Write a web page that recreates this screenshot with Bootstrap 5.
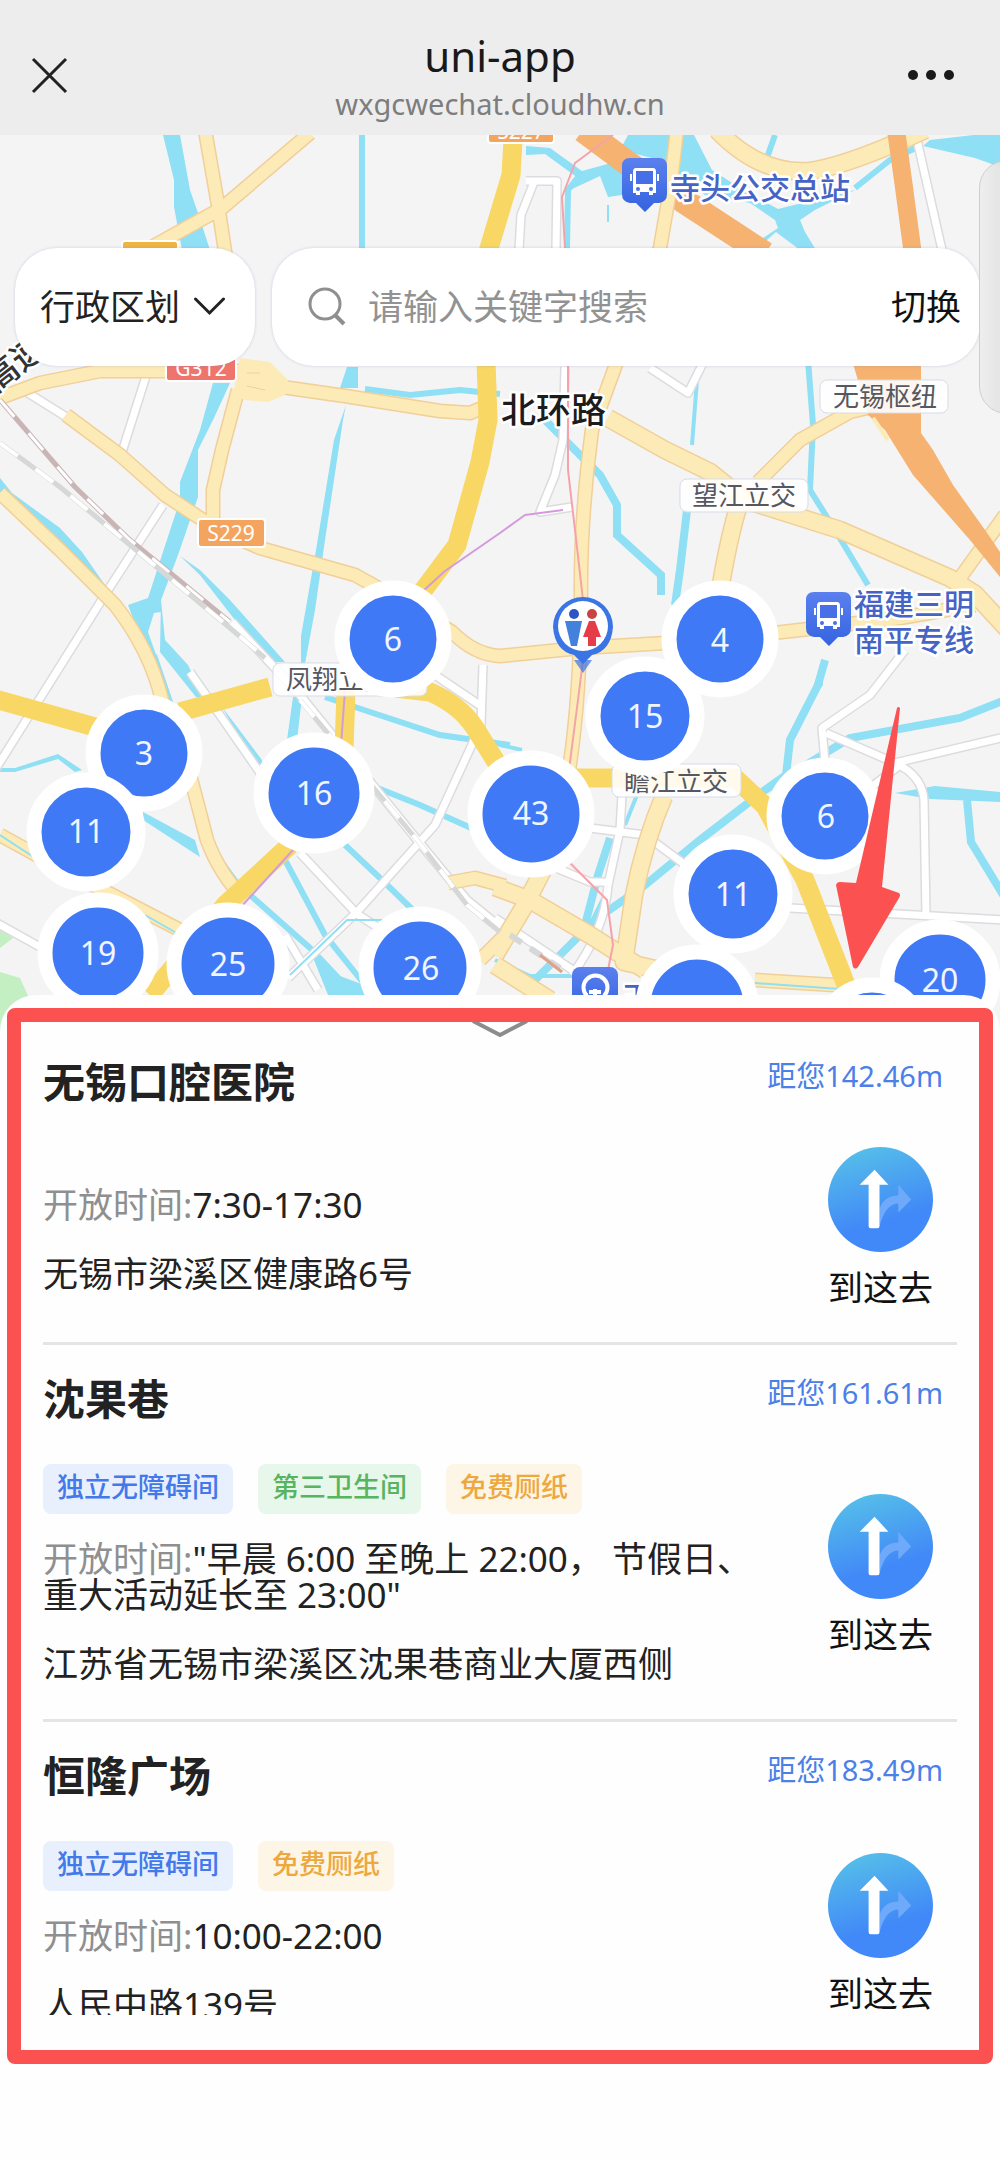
<!DOCTYPE html>
<html lang="zh-CN">
<head>
<meta charset="utf-8">
<meta name="viewport" content="width=device-width, initial-scale=1">
<title>uni-app</title>
<link href="https://cdn.jsdelivr.net/npm/bootstrap@5.3.0/dist/css/bootstrap.min.css" rel="stylesheet">
<style>
  :root { --brand: #4079f5; --note: #fb5151; --ink: #222; }
  body { font-family: "Noto Sans", "Noto Sans CJK SC", sans-serif; color: var(--ink); background: #fefefe; }
  .app-bar { height: 135px; background: #ededed; padding: 27px 30px 0; }
  .app-title { font-size: 42px; line-height: 58px; color: #191919; }
  .app-host { font-size: 29px; line-height: 38px; color: #7d7d7d; }
  .bar-btn { width: 64px; margin-top: 27px; line-height: 0; }
  .map-area { height: 905px; background: #f4f4f4; }
  .map-tools { padding: 113px 20px 0 15px; gap: 17px; z-index: 2; }
  .pill { height: 118px; border-radius: 42px; background-color: #fff; box-shadow: 0 0 3px rgba(120,130,190,.35); font-size: 35px; }
  .area-select { width: 240px; border: 0; padding: 0 25px; color: var(--ink);
    background-image: url("data:image/svg+xml,%3Csvg xmlns='http://www.w3.org/2000/svg' viewBox='0 0 32 20'%3E%3Cpath d='M2 2l14 14L30 2' fill='none' stroke='%23222' stroke-width='3' stroke-linecap='round'/%3E%3C/svg%3E");
    background-size: 33px 20px; background-position: right 29px center; background-repeat: no-repeat; }
  .search-box { padding: 0 19px 0 36px; }
  .search-box input { font-size: 35px; padding: 0 0 0 22px; }
  .search-box input::placeholder { color: #929292; opacity: 1; }
  .switch-btn { font-size: 35px; color: #111; }
  .side-panel { top: 25px; right: -60px; width: 81px; height: 254px; border-radius: 28px; z-index: 3;
    background: linear-gradient(90deg, #eee, #e3e3e3 30%); border: 1px solid #ccc; opacity: .93; }
  .sheet { margin-top: -45px; border-radius: 36px 36px 0 0; background: #fefefe; z-index: 3; }
  .sheet-handle { height: 44px; line-height: 0; margin-bottom: -11px; }
  .marked-frame { top: 13px; right: 7px; bottom: 97px; left: 7px; border: 14px solid var(--note); border-radius: 8px; pointer-events: none; }
  .place-list { padding: 0 43px; margin-bottom: 146px; min-height: 0; scrollbar-width: none; }
  .place-list::-webkit-scrollbar { display: none; }
  .place { padding: 29px 0 36px; border-bottom: 3px solid #e5e5e5; }
  .place-name { font-size: 42px; line-height: 50px; font-weight: 700; }
  .place-dist { font-size: 29px; line-height: 38px; color: #4b80e8; padding-right: 14px; }
  .place-body { margin-top: 40px; padding-right: 24px; gap: 60px; font-size: 35px; line-height: 36px; }
  .tag-row { gap: 25px; }
  .tag { height: 50px; padding: 0 14px 4px; border-radius: 8px; font-size: 27px; line-height: 46px; font-weight: 500; }
  .tag-blue { color: #4379ea; background: #e8f0fe; }
  .tag-green { color: #57b560; background: #e8f7ec; }
  .tag-gold { color: #eda83e; background: #fdf5e6; }
  .hours { margin: 27px 0 33px; }
  .hours span { color: #8f8f8f; }
  .address { margin: 0 0 1px; }
  .go-btn { width: 105px; font-size: 35px; line-height: 36px; color: #111; }
  .go-btn svg { margin-bottom: 18px; }
  .cased { stroke: #f1cf98; } .lite { stroke: #fcebb7; } .bold-road { stroke: #f8d765; }
  .w-case { stroke: #dcdce0; } .w-road { stroke: #fff; }
  .halo { paint-order: stroke; stroke: #fff; stroke-width: 5px; stroke-linejoin: round; font-weight: 500; }
</style>
<script src="https://cdn.jsdelivr.net/npm/bootstrap@5.3.0/dist/js/bootstrap.bundle.min.js"></script>
</head>
<body class="vh-100 d-flex flex-column overflow-hidden">

<header class="app-bar d-flex justify-content-between flex-shrink-0">
  <button type="button" class="bar-btn btn p-0 border-0 text-start align-self-start" aria-label="关闭">
    <svg width="40" height="42" viewBox="0 0 40 42" fill="none" stroke="#222" stroke-width="3"><path d="M3 5l33 33M36 5L3 38"/></svg>
  </button>
  <div class="text-center">
    <div class="app-title">uni-app</div>
    <div class="app-host">wxgcwechat.cloudhw.cn</div>
  </div>
  <button type="button" class="bar-btn btn p-0 border-0 align-self-start" aria-label="更多">
    <svg width="64" height="42" viewBox="0 0 64 42" fill="#191919"><circle cx="7" cy="21" r="5"/><circle cx="25" cy="21" r="5"/><circle cx="43" cy="21" r="5"/></svg>
  </button>
</header>

<section class="map-area position-relative overflow-hidden flex-shrink-0">
  <svg class="position-absolute top-0 start-0 w-100 h-100" viewBox="0 135 1000 905" preserveAspectRatio="xMidYMin slice" role="img" aria-label="地图">
    <defs>
      <path id="roads-s" d="M205 130L218 205L240 350M310 133L222 208L150 248M0 398L40 383L100 371L240 371M238 390L222 450L213 490V530M482 408L470 413L440 411L345 396L275 386M66 415L120 455L165 495L215 528L260 548L355 575L400 600L452 632Q475 655 500 656L580 648L700 641L800 630L900 618L975 605M0 493L60 550L115 605Q150 650 162 700L190 775L207 840Q220 875 245 900M0 835L60 868L180 930M448 883L475 878L505 886M758 482L800 440L850 412L880 405M960 578L1005 515M677 130L670 190L660 248L615 367L592 430Q580 520 581 600Q580 700 569 770M755 980L850 986M480 960L510 930"/>
      <path id="roads-m" d="M717 130Q760 175 810 171Q850 165 925 130M608 418L665 450L710 472L745 500L840 530L950 578L975 594L1010 632M742 495Q730 530 720 590M664 796Q645 840 634 895L624 962L660 970M495 887L530 900L590 935L645 970M543 870L525 905L495 955M495 965L550 1000"/>
      <path id="roads-b" d="M-5 699L95 727M180 712L270 687M395 688L430 692Q460 705 475 728L500 768M290 845L225 905L150 995M346 690L344 750M486 360L488 420L480 462L457 545L425 588L395 625M513 140L511 175L487 255M500 778H735L765 806L805 880L848 990"/>
      <path id="roads-w" d="M20 388L68 418M147 373L122 452M163 505L108 590L-5 770M232 622L300 695L418 841L467 900L510 935M190 672L265 780M300 853L357 914L385 932M483 665L481 725L435 825L357 912L288 978M435 675L481 706M-5 922L40 947M285 935L318 990M526 181H557L556 250M534 182L521 215L519 250M565 367L563 440L555 475L540 512L572 507M650 368L688 393L702 365M917 140L942 250M905 650L870 695L822 728L825 762M826 733L895 763L1005 737M895 763Q922 775 924 800L926 916M900 765L870 788M790 908L1005 920M622 795L620 830L608 885Q605 930 572 975M590 828L645 835L684 864M556 868L590 882H608M495 918L580 975"/>
      <linearGradient id="pin-fill" x1="0" y1="0" x2="0" y2="1"><stop offset="0" stop-color="#5b80ee"/><stop offset="1" stop-color="#3464e0"/></linearGradient>
      <linearGradient id="go-fill" x1=".2" y1="0" x2=".5" y2="1"><stop offset="0" stop-color="#56c1e8"/><stop offset=".75" stop-color="#4188f8"/><stop offset="1" stop-color="#4188f8"/></linearGradient>
      <g id="bus-pin">
        <path d="M8 0H37Q45 0 45 8V36Q45 44 37 45H32L23 54L14 45H8Q0 44 0 36V8Q0 0 8 0Z" fill="url(#pin-fill)"/>
        <path d="M14 10H31Q34 10 34 14V35H31V37H27V34H18V37H14V35H11V14Q11 10 14 10Z" fill="#fff"/>
        <rect x="14" y="13" width="17" height="13" fill="#4870e6"/><circle cx="16" cy="31" r="2" fill="#4870e6"/><circle cx="29" cy="31" r="2" fill="#4870e6"/>
        <path d="M9 16v7M36 16v7" stroke="#fff" stroke-width="2"/>
      </g>
    </defs>

    <!-- green space and water -->
    <path d="M0 972L20 978L30 1000V1040H0ZM0 928L13 938L0 948Z" fill="#c3efc3"/>
    <g fill="#8fdff5">
      <path d="M163 135H180L190 190L198 213L210 250H182L174 207V180ZM347 367H358V388H340ZM346 405L334 440L316 550L301 636V664H305L315 610L325 540L343 420Z"/>
      <path d="M213 383H230L213 420L198 450V497L178 555L161 600V612L154 613L148 632L172 700H168L145 650L128 605L148 598L162 555L180 500V482L200 430ZM161 600L165 640L188 665L203 697H196L160 652Z"/>
      <path d="M0 478L12 493L60 528L82 552L107 588L70 555L15 505L0 492ZM180 556L200 570L230 600L285 662H275L235 620L200 575Z"/>
      <path d="M293 697H302L297 740H287ZM143 812L195 840L200 857L143 820ZM310 950L340 976L372 988V1000H330ZM222 707L262 760V768L255 765Z"/>
      <path d="M628 135H694L712 170L740 188L778 209L855 190L815 210L800 220L805 232L816 250H800L776 232L760 246V240L778 228L775 220L750 203L705 195L660 160L620 150ZM930 140L1000 132V167L975 158L923 146ZM526 146L550 148L582 171L622 160V195L608 197L600 176L570 190L578 178L545 154L526 155Z"/>
      <path d="M895 793L935 786L1000 792V802L930 799ZM823 658V685L808 705L812 690ZM0 768H15L58 754L82 770L75 772L58 759L15 772H0Z"/>
    </g>
    <g fill="none" stroke="#8fdff5" stroke-width="6">
      <path d="M362 135V248M365 389L410 395L460 390L500 394M325 697L370 712L440 735L510 745M370 785L420 805L480 832M345 845L380 878L415 912M285 860L325 935L365 985M250 895L310 948L345 985"/>
      <path d="M855 188L890 160L922 145M775 135L762 172M582 172L568 190L567 248M808 360L813 425L810 490L835 530L868 585"/>
      <path stroke-width="8" d="M545 420L575 450L600 475L617 505V535L661 575V595M687 510L680 570L675 605M825 660L818 685L790 740L786 775L765 790L700 840L645 885L595 920L535 980M1005 700L960 718L850 738L765 790M967 800L971 842L1005 898M610 838L598 875L585 925"/>
      <path stroke-width="4" d="M697 380L692 445M195 785L210 845L238 883M155 655L172 705M495 960L530 976H575M500 745L522 750M637 795L625 825M590 925L605 895"/>
      <path stroke-width="2" d="M608 205V222"/>
    </g>

    <!-- roads -->
    <g fill="none" stroke-linejoin="round">
      <use href="#roads-w" class="w-case" stroke-width="10"/><use href="#roads-w" class="w-road" stroke-width="7"/>
      <path d="M583 130L630 165L690 205L765 254" stroke="#f5b271" stroke-width="25"/>
      <use href="#roads-s" class="cased" stroke-width="15"/><use href="#roads-m" class="cased" stroke-width="19"/>
      <use href="#roads-s" class="lite" stroke-width="12"/><use href="#roads-m" class="lite" stroke-width="16"/>
      <path d="M240 358L270 362L288 380L285 395L268 402L245 400L233 395Z" fill="#fcebb7"/>
      <path d="M247 373h13M247 386l18 4" stroke="#f1cf98"/>
      <use href="#roads-b" class="bold-road" stroke-width="19"/>
      <path d="M896 130L903 180L913 255" stroke="#f5b271" stroke-width="18"/>
      <path d="M852 360H921V433L933 450L953 485L985 530L1000 552V577L970 540L913 475L885 430L868 415Z" fill="#f5b271"/>
      <path d="M873 418L888 440" stroke="#fcebb7" stroke-width="4"/>
      <path d="M0 400L75 487L130 540L230 622" stroke="#c9b5b5" stroke-width="5"/><path d="M0 400L75 487L130 540L230 622" stroke="#fff" stroke-width="3" stroke-dasharray="22 22"/>
      <path d="M0 443L60 487L130 545L230 628L265 658M300 700L418 841L467 905L500 932" stroke="#d6d8d8" stroke-width="5"/><path d="M0 443L60 487L130 545L230 628L265 658M300 700L418 841L467 905L500 932" stroke="#fff" stroke-width="4" stroke-dasharray="22 22"/>
      <path d="M510 935L560 968" stroke="#d6d8d8" stroke-width="6" stroke-dasharray="14 10"/><path d="M540 955L562 972" stroke="#e0a08e" stroke-width="3"/>
      <path d="M755 983L840 989M0 835L35 858M145 915L180 935M290 975L347 920H385" stroke="#8fdff5" stroke-width="2"/>
      <path d="M613 135L575 163L562 197L565 248L568 367V470L575 530L583 600V660L578 700L569 770M570 863L607 900L613 945L608 970" stroke="#f4a3aa" stroke-width="2"/>
      <path d="M563 510L525 515L500 533L445 571L423 591M345 690L341 745M293 850L240 908" stroke="#d39bdc" stroke-width="2"/>
    </g>

    <!-- road numbers and place labels -->
    <g font-size="21" fill="#fff" text-anchor="middle" stroke-width="2">
      <rect x="488" y="115" width="66" height="28" rx="3" fill="#f3a560" stroke="#fff"/><text x="521" y="139">S227</text>
      <rect x="122" y="241" width="56" height="28" rx="3" fill="#f0b440" stroke="#fff"/>
      <rect x="166" y="352" width="70" height="29" rx="3" fill="#ef746c" stroke="#fff"/><text x="201" y="376">G312</text>
      <rect x="198" y="519" width="67" height="28" rx="3" fill="#f3a560" stroke="#fff"/><text x="231" y="541">S229</text>
    </g>
    <g fill="#fff" fill-opacity=".88" stroke="#d5dde8">
      <rect x="820" y="380" width="128" height="33" rx="7"/><rect x="680" y="479" width="128" height="33" rx="7"/>
      <rect x="273" y="663" width="154" height="33" rx="7"/><rect x="612" y="764" width="129" height="33" rx="7"/>
    </g>
    <g font-size="26" fill="#555862">
      <text x="833" y="406">无锡枢纽</text><text x="692" y="505">望江立交</text><text x="286" y="689">凤翔立交</text><text x="624" y="791">瞻江立交</text>
    </g>
    <text class="halo" x="501" y="423" font-size="35" fill="#1c1c1c">北环路</text>
    <text class="halo" x="-12" y="388" font-size="34" fill="#333" transform="rotate(-38 0 380)">高速</text>
    <g class="halo" font-size="30" fill="#4664c6">
      <text x="670" y="199">寺头公交总站</text><text x="854" y="615">福建三明</text><text x="854" y="651">南平专线</text><text x="622" y="1008">王</text>
    </g>
    <use href="#bus-pin" x="622" y="158"/><use href="#bus-pin" x="806" y="592"/>
    <rect x="572" y="967" width="46" height="45" rx="8" fill="url(#pin-fill)"/>
    <path d="M587 996A12 12 0 1 1 604 996M595 989v12M589 992h12" fill="none" stroke="#fff" stroke-width="4"/>

    <!-- selected toilet pin -->
    <path d="M574 660L583 673L592 660" fill="#3b74e4" opacity=".7"/>
    <path d="M553 627A30 30 0 1 1 613 627Q611 651 592 655L583 664L574 655Q555 651 553 627Z" fill="#3b74e4"/>
    <circle cx="583" cy="626" r="25" fill="#fff"/>
    <circle cx="574" cy="614" r="5" fill="#2f55c4"/><path d="M565 621H582L577 646H571Z" fill="#4481dc"/>
    <circle cx="592" cy="614" r="5" fill="#c94343"/><path d="M589 621H595L601 637H596V646H588V637H583Z" fill="#e63c49"/>

    <!-- clusters -->
    <g fill="var(--brand)" stroke="#fff" stroke-width="15">
      <circle cx="393" cy="639" r="51"/><circle cx="720" cy="639" r="51"/><circle cx="645" cy="716" r="52"/><circle cx="144" cy="753" r="51"/>
      <circle cx="86" cy="832" r="52"/><circle cx="314" cy="793" r="53"/><circle cx="531" cy="814" r="56"/><circle cx="825" cy="816" r="51"/>
      <circle cx="98" cy="953" r="53"/><circle cx="228" cy="964" r="54"/><circle cx="420" cy="968" r="54"/><circle cx="697" cy="1006" r="54"/>
      <circle cx="733" cy="894" r="52"/><circle cx="940" cy="980" r="53"/><circle cx="872" cy="1036" r="51"/>
    </g>
    <g font-size="32" fill="#f0f5ff" text-anchor="middle">
      <text x="393" y="651">6</text><text x="720" y="652">4</text><text x="645" y="728">15</text><text x="144" y="765">3</text>
      <text x="86" y="843">11</text><text x="314" y="805">16</text><text x="531" y="825">43</text><text x="826" y="828">6</text>
      <text x="98" y="965">19</text><text x="228" y="976">25</text><text x="421" y="980">26</text><text x="733" y="906">11</text><text x="940" y="992">20</text>
    </g>
    <path d="M897 708Q898 706 900 708L882 887L899 893Q901 895 899 898L858 967Q855 970 853 967L836 885Q837 882 840 882L856 883Z" fill="var(--note)"/>
  </svg>

  <div class="map-tools position-relative d-flex">
    <select class="pill area-select form-select flex-shrink-0" aria-label="行政区划"><option>行政区划</option></select>
    <form class="pill search-box d-flex align-items-center flex-grow-1">
      <svg class="flex-shrink-0" width="38" height="40" viewBox="0 0 38 40" fill="none" stroke="#8f8f8f" stroke-width="3"><circle cx="17" cy="17" r="15"/><path d="M27 28l9 9" stroke-width="4"/></svg>
      <input class="form-control border-0 shadow-none bg-transparent flex-grow-1" type="search" placeholder="请输入关键字搜索" aria-label="请输入关键字搜索">
      <button type="button" class="switch-btn btn p-0 border-0 flex-shrink-0">切换</button>
    </form>
  </div>
  <div class="side-panel position-absolute"></div>
</section>

<main class="sheet position-relative d-flex flex-column flex-grow-1 overflow-hidden">
  <button type="button" class="sheet-handle btn border-0 p-0 d-flex align-items-end justify-content-center flex-shrink-0" aria-label="收起">
    <svg width="56" height="20" viewBox="0 0 56 20" fill="none" stroke="#8c8c8c" stroke-width="4"><path d="M1 2L28 16L55 2"/></svg>
  </button>
  <div class="place-list flex-grow-1 overflow-auto">
    <article class="place">
      <div class="d-flex justify-content-between"><h2 class="place-name m-0">无锡口腔医院</h2><div class="place-dist">距您142.46m</div></div>
      <div class="place-body d-flex align-items-center">
        <div class="flex-grow-1">
          <p class="hours"><span>开放时间:</span>7:30-17:30</p>
          <p class="address">无锡市梁溪区健康路6号</p>
        </div>
        <button type="button" class="go-btn btn p-0 border-0 flex-shrink-0 d-flex flex-column">
          <svg width="105" height="105" viewBox="0 0 106 106"><circle cx="53" cy="53" r="53" fill="url(#go-fill)"/><path d="M52 80V62Q57 49 71 49V38L84 53L71 66V57Q58 57 52 80Z" fill="#6fa9fa"/><path d="M47 23L61 38H52V80Q52 82 50 82H43Q41 82 41 80V38H32Z" fill="#fff"/></svg>到这去
        </button>
      </div>
    </article>
    <article class="place">
      <div class="d-flex justify-content-between"><h2 class="place-name m-0">沈果巷</h2><div class="place-dist">距您161.61m</div></div>
      <div class="place-body d-flex align-items-center">
        <div class="flex-grow-1">
          <div class="tag-row d-flex"><span class="tag tag-blue">独立无障碍间</span><span class="tag tag-green">第三卫生间</span><span class="tag tag-gold">免费厕纸</span></div>
          <p class="hours"><span>开放时间:</span>"早晨 6:00 至晚上 22:00， 节假日、重大活动延长至 23:00"</p>
          <p class="address">江苏省无锡市梁溪区沈果巷商业大厦西侧</p>
        </div>
        <button type="button" class="go-btn btn p-0 border-0 flex-shrink-0 d-flex flex-column">
          <svg width="105" height="105" viewBox="0 0 106 106"><circle cx="53" cy="53" r="53" fill="url(#go-fill)"/><path d="M52 80V62Q57 49 71 49V38L84 53L71 66V57Q58 57 52 80Z" fill="#6fa9fa"/><path d="M47 23L61 38H52V80Q52 82 50 82H43Q41 82 41 80V38H32Z" fill="#fff"/></svg>到这去
        </button>
      </div>
    </article>
    <article class="place">
      <div class="d-flex justify-content-between"><h2 class="place-name m-0">恒隆广场</h2><div class="place-dist">距您183.49m</div></div>
      <div class="place-body d-flex align-items-center">
        <div class="flex-grow-1">
          <div class="tag-row d-flex"><span class="tag tag-blue">独立无障碍间</span><span class="tag tag-gold">免费厕纸</span></div>
          <p class="hours"><span>开放时间:</span>10:00-22:00</p>
          <p class="address">人民中路139号</p>
        </div>
        <button type="button" class="go-btn btn p-0 border-0 flex-shrink-0 d-flex flex-column">
          <svg width="105" height="105" viewBox="0 0 106 106"><circle cx="53" cy="53" r="53" fill="url(#go-fill)"/><path d="M52 80V62Q57 49 71 49V38L84 53L71 66V57Q58 57 52 80Z" fill="#6fa9fa"/><path d="M47 23L61 38H52V80Q52 82 50 82H43Q41 82 41 80V38H32Z" fill="#fff"/></svg>到这去
        </button>
      </div>
    </article>
  </div>
  <div class="marked-frame position-absolute"></div>
</main>
</body>
</html>
